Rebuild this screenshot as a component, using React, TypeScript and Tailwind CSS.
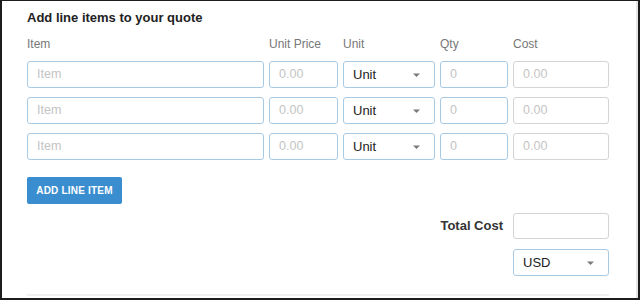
import React from 'react';

const font = { fontFamily: '"Liberation Sans", Arial, sans-serif' };

const Caret = () => (
  <svg width="7" height="4" viewBox="0 0 7 4" className="shrink-0">
    <path d="M0 0.5 L7 0.5 L3.5 4 Z" fill="#7a7a7a" />
  </svg>
);

const Field = ({ placeholder, muted = false }: { placeholder: string; muted?: boolean }) => (
  <div
    className={
      muted
        ? "h-[27px] rounded-[3px] border border-[#d4d4d4] flex items-center px-[9px] text-[12.5px] text-[#c4c4c4]"
        : "h-[27px] rounded-[3px] border border-[#a8cbe5] flex items-center px-[9px] text-[12.5px] text-[#c4c4c4]"
    }
  >
    {placeholder}
  </div>
);

const Select = ({ value }: { value: string }) => (
  <div className="h-[27px] rounded-[3px] border border-[#a8cbe5] flex items-center justify-between pl-[9px] pr-[14px] text-[13px] text-[#222]">
    <span>{value}</span>
    <Caret />
  </div>
);

const LABELS = ["Item", "Unit Price", "Unit", "Qty", "Cost"];

export default function App() {
  return (
    <div className="w-[640px] h-[300px] bg-[#1c1c1c] pt-[1px] pl-[2px] pr-[2px] pb-[2px]" style={font}>
      <div className="h-full bg-white border-r-2 border-[#e5e5e5] pl-[25px] pt-[9px]">
        <div className="w-[582px] flex flex-col">
          <h2 className="text-[13px] leading-[16px] font-bold text-[#222]">Add line items to your quote</h2>

          <div className="grid grid-cols-[237px_69px_92px_68px_96px] gap-x-[5px] mt-[11px] text-[12px] leading-[14px] text-[#777]">
            {LABELS.map((l) => (
              <div key={l}>{l}</div>
            ))}
          </div>

          <div className="grid grid-cols-[237px_69px_92px_68px_96px] gap-x-[5px] gap-y-[9px] mt-[10px]">
            {[0, 1, 2].map((i) => (
              <React.Fragment key={i}>
                <Field placeholder="Item" />
                <Field placeholder="0.00" />
                <Select value="Unit" />
                <Field placeholder="0" />
                <Field placeholder="0.00" muted />
              </React.Fragment>
            ))}
          </div>

          <div className="mt-[17px]">
            <button className="h-[27px] w-[95px] rounded-[2px] bg-[#3a8ecf] text-white text-[10px] font-bold tracking-[0.2px]">
              ADD LINE ITEM
            </button>
          </div>

          <div className="flex justify-end items-center gap-[10px] mt-[9px]">
            <span className="text-[13px] font-bold text-[#333]">Total Cost</span>
            <div className="w-[96px] h-[26px] rounded-[3px] border border-[#d4d4d4]" />
          </div>

          <div className="flex justify-end mt-[10px]">
            <div className="w-[96px]">
              <Select value="USD" />
            </div>
          </div>

          <div className="mt-[18px] h-[2px] bg-[#f0f0f0]" />
        </div>
      </div>
    </div>
  );
}
